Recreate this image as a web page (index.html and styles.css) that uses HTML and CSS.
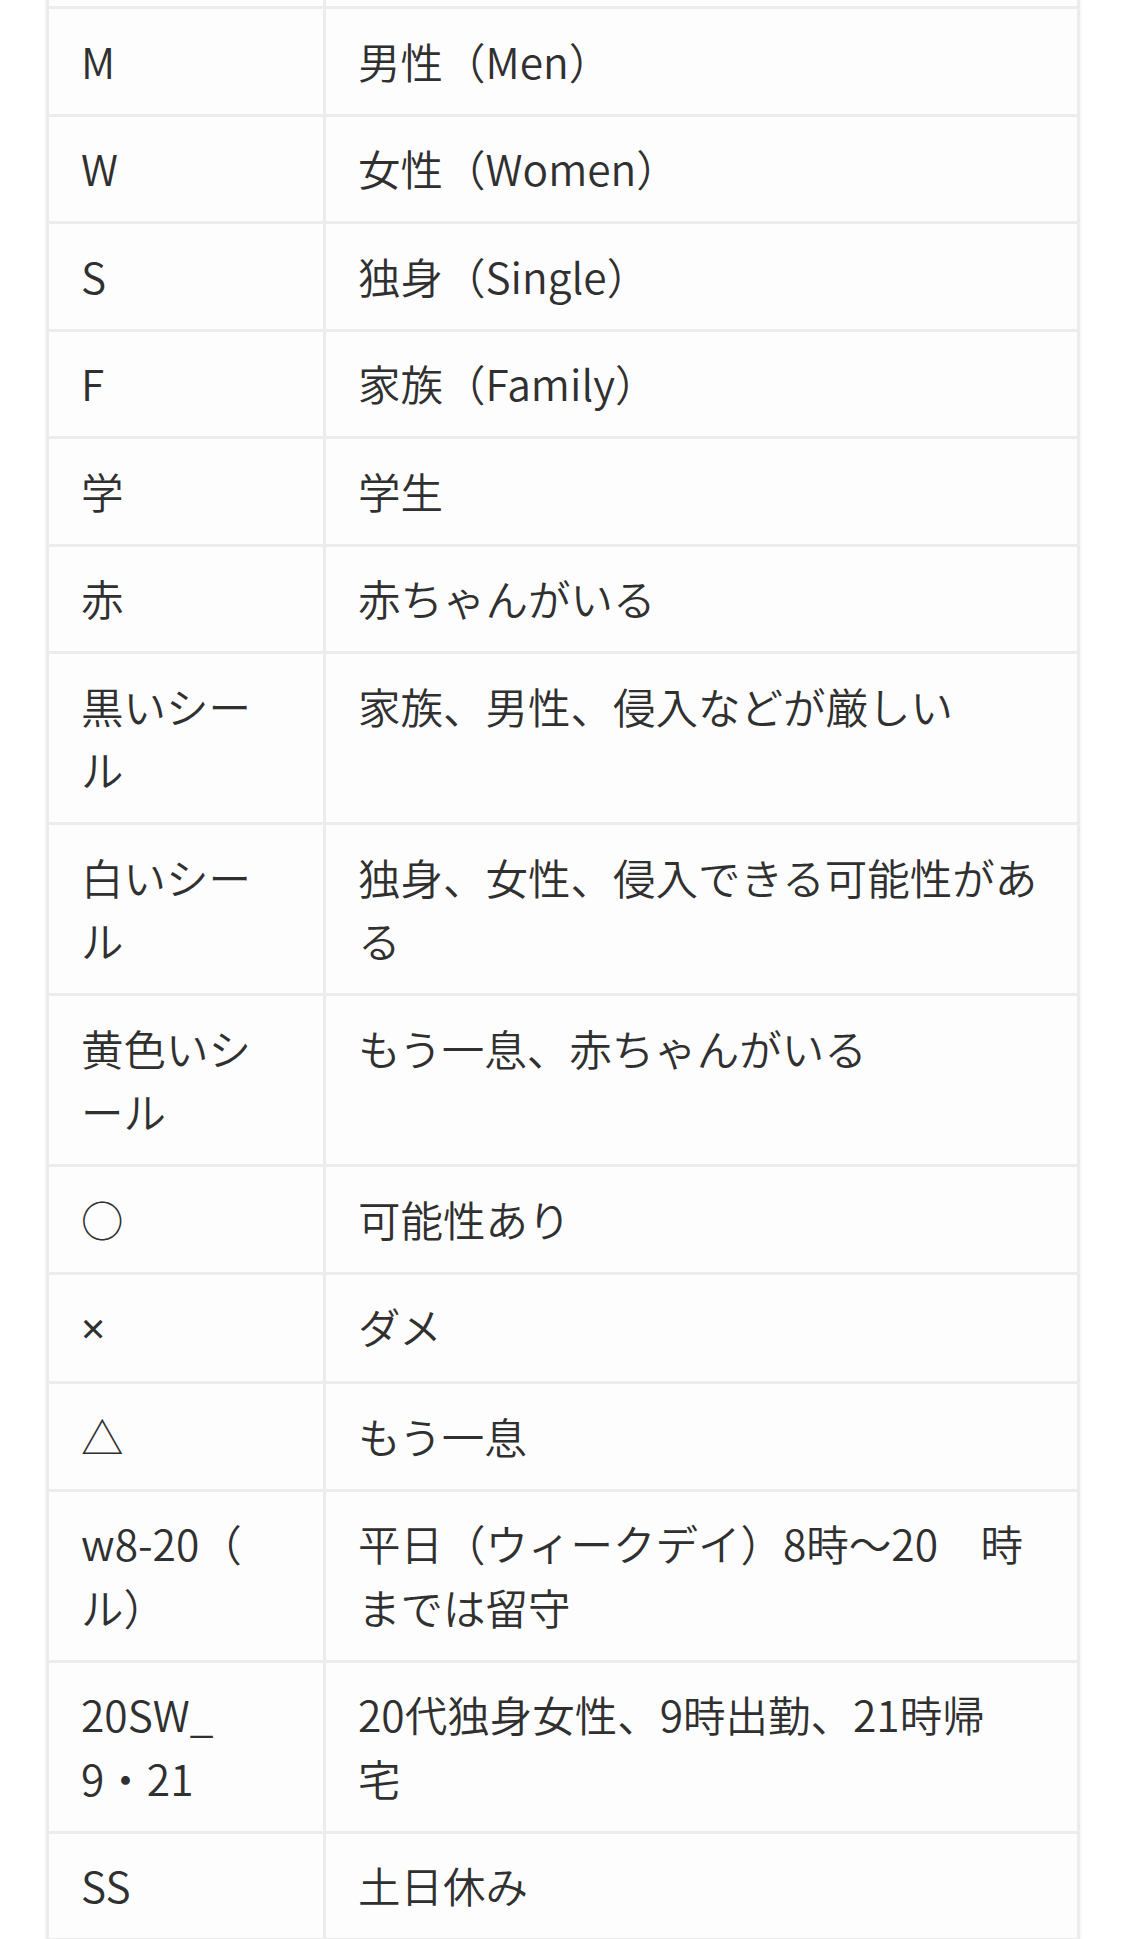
FILE: index.html
```html
<!DOCTYPE html>
<html lang="ja">
<head>
<meta charset="utf-8">
<title>記号一覧</title>
<link rel="stylesheet" href="styles.css">
</head>
<body>
<main class="page">
  <table class="legend">
    <colgroup>
      <col class="col-key">
      <col class="col-desc">
    </colgroup>
    <tbody>
      <tr class="cut"><td></td><td></td></tr>
      <tr><td>M</td><td>男性（Men）</td></tr>
      <tr><td>W</td><td>女性（Women）</td></tr>
      <tr><td>S</td><td>独身（Single）</td></tr>
      <tr><td>F</td><td>家族（Family）</td></tr>
      <tr><td>学</td><td>学生</td></tr>
      <tr><td>赤</td><td>赤ちゃんがいる</td></tr>
      <tr><td>黒いシール</td><td>家族、男性、侵入などが厳しい</td></tr>
      <tr><td>白いシール</td><td>独身、女性、侵入できる可能性がある</td></tr>
      <tr><td>黄色いシール</td><td>もう一息、赤ちゃんがいる</td></tr>
      <tr><td>○</td><td>可能性あり</td></tr>
      <tr><td><span class="latin">×</span></td><td>ダメ</td></tr>
      <tr><td>△</td><td>もう一息</td></tr>
      <tr><td>w8-20（<br>ル）</td><td>平日（ウィークデイ）8時〜20　時までは留守</td></tr>
      <tr><td>20SW_<br>9・21</td><td>20代独身女性、9時出勤、21時帰<br>宅</td></tr>
      <tr><td>SS</td><td>土日休み</td></tr>
    </tbody>
  </table>
</main>
</body>
</html>
```

FILE: styles.css
```css
html, body {
  margin: 0;
  padding: 0;
  background: #ffffff;
}

.page {
  padding: 0 44px 0 46px;
}

.legend {
  width: 1034px;
  border-collapse: collapse;
  table-layout: fixed;
  background: #fdfdfd;
  box-shadow: 0 0 4px rgba(0, 0, 0, 0.07);
  font-family: "Noto Sans CJK JP", "Noto Sans", sans-serif;
  font-weight: 350;
  font-size: 42.5px;
  line-height: 63.5px;
  color: #303030;
}

.col-key {
  width: 277px;
}

.legend td {
  border: 3px solid #ececec;
  padding: 19.5px 36px 21.5px 32px;
  vertical-align: top;
  overflow-wrap: anywhere;
}

.legend .cut td {
  border-top: none;
  height: 6px;
  padding: 0;
}

.latin {
  font-family: "Noto Sans", "Liberation Sans", sans-serif;
  font-weight: 400;
}
```
